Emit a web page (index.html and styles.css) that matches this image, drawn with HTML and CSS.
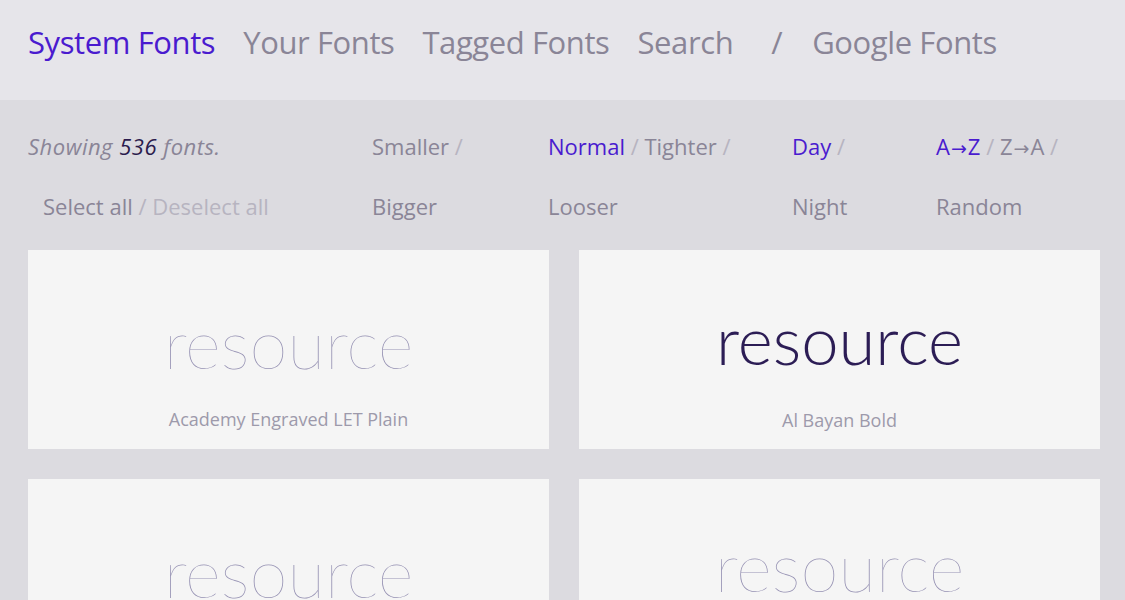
FILE: index.html
```html
<!DOCTYPE html>
<html lang="en">
<head>
    <meta charset="UTF-8">
    <meta name="viewport" content="width=device-width, initial-scale=1.0">
    <title>Fonts</title>
    <link rel="stylesheet" href="styles.css">
</head>
<body>
    <!-- top nav -->
    <div class="top">
        <a class="on" href="#">System Fonts</a>
        <a href="#">Your Fonts</a>
        <a href="#">Tagged Fonts</a>
        <a class="search" href="#">Search</a>
        <span class="slash">/</span>
        <a href="#">Google Fonts</a>
    </div>
    <!-- controls -->
    <div class="ctrl">
        <div class="count"><i>Showing <b>536</b> fonts.</i></div>
        <div><a href="#">Smaller</a> <span class="sep">/</span></div>
        <div><a class="on" href="#">Normal</a> <span class="sep">/</span> <a href="#">Tighter</a> <span class="sep">/</span></div>
        <div><a class="on" href="#">Day</a> <span class="sep">/</span></div>
        <div><a class="on" href="#">A<span class="arr">→</span>Z</a> <span class="sep">/</span> <a href="#">Z<span class="arr">→</span>A</a> <span class="sep">/</span></div>
        <div class="sel"><a href="#">Select all</a> <span class="sep">/</span> <a class="dim" href="#">Deselect all</a></div>
        <div><a href="#">Bigger</a></div>
        <div><a href="#">Looser</a></div>
        <div><a href="#">Night</a></div>
        <div><a href="#">Random</a></div>
    </div>
    <!-- font cards -->
    <div class="grid">
        <div class="card">
            <div class="word dots">resource</div>
            <div class="name">Academy Engraved LET Plain</div>
        </div>
        <div class="card">
            <div class="word solid">resource</div>
            <div class="name">Al Bayan Bold</div>
        </div>
        <div class="card">
            <div class="word dots">resource</div>
            <div class="name">Academy Engraved LET Plain</div>
        </div>
        <div class="card">
            <div class="word dots up">resource</div>
            <div class="name">Al Bayan Plain</div>
        </div>
    </div>
</body>
</html>
```

FILE: styles.css
```css
body{
    margin: 0;
    background: #dcdbe0;
    font-family: "Open Sans", "Noto Sans", sans-serif;
    color: #8a8597;
    overflow: hidden;
}
a{
    text-decoration: none;
    color: #8a8597;
}
.on{
    color: #4a1bcf;
}
.top{
    height: 100px;
    box-sizing: border-box;
    background: #e6e5ea;
    display: flex;
    align-items: flex-start;
    padding: 20px 28px 0;
    font-size: 31px;
    line-height: 44px;
    letter-spacing: -0.4px;
}
.top a{
    margin-right: 28px;
}
.top .search{
    margin-right: 38px;
}
.top .slash{
    margin-right: 30px;
}
.ctrl{
    display: grid;
    grid-template-columns: 344px 176px 244px 144px 1fr;
    grid-auto-rows: 60px;
    align-items: center;
    padding: 16px 28px 0;
    font-size: 22px;
}
.count i{
    letter-spacing: 0.5px;
}
.count b{
    font-weight: 400;
    color: #2b1b4d;
}
.arr{
    font-family: "DejaVu Sans", sans-serif;
    font-size: 19px;
    margin: 0 1px;
}
.sel{
    padding-left: 15px;
}
.sep{
    color: #b7b4c0;
}
.dim{
    color: #b7b4c0;
}
.grid{
    display: grid;
    grid-template-columns: 521px 521px;
    gap: 30px;
    padding: 14px 28px 0;
}
.card{
    height: 199px;
    background: #f5f5f5;
    display: flex;
    flex-direction: column;
    align-items: center;
}
.word{
    font-family: Lato, sans-serif;
    font-size: 69px;
    line-height: 70px;
    margin-top: 58px;
    height: 70px;
}
.dots{
    font-weight: 100;
    color: transparent;
    background: radial-gradient(circle, #5a538a 0.6px, transparent 0.9px) 0 0 / 2px 2px;
    -webkit-background-clip: text;
    background-clip: text;
}
.solid{
    font-size: 67px;
    font-weight: 300;
    color: #2c1d55;
    margin-top: 54px;
    height: 74px;
}
.up{
    margin-top: 52px;
    height: 76px;
}
.name{
    margin-top: 29px;
    font-size: 18px;
    color: #9d9aab;
}
.solid + .name{
    margin-top: 30px;
}
```
